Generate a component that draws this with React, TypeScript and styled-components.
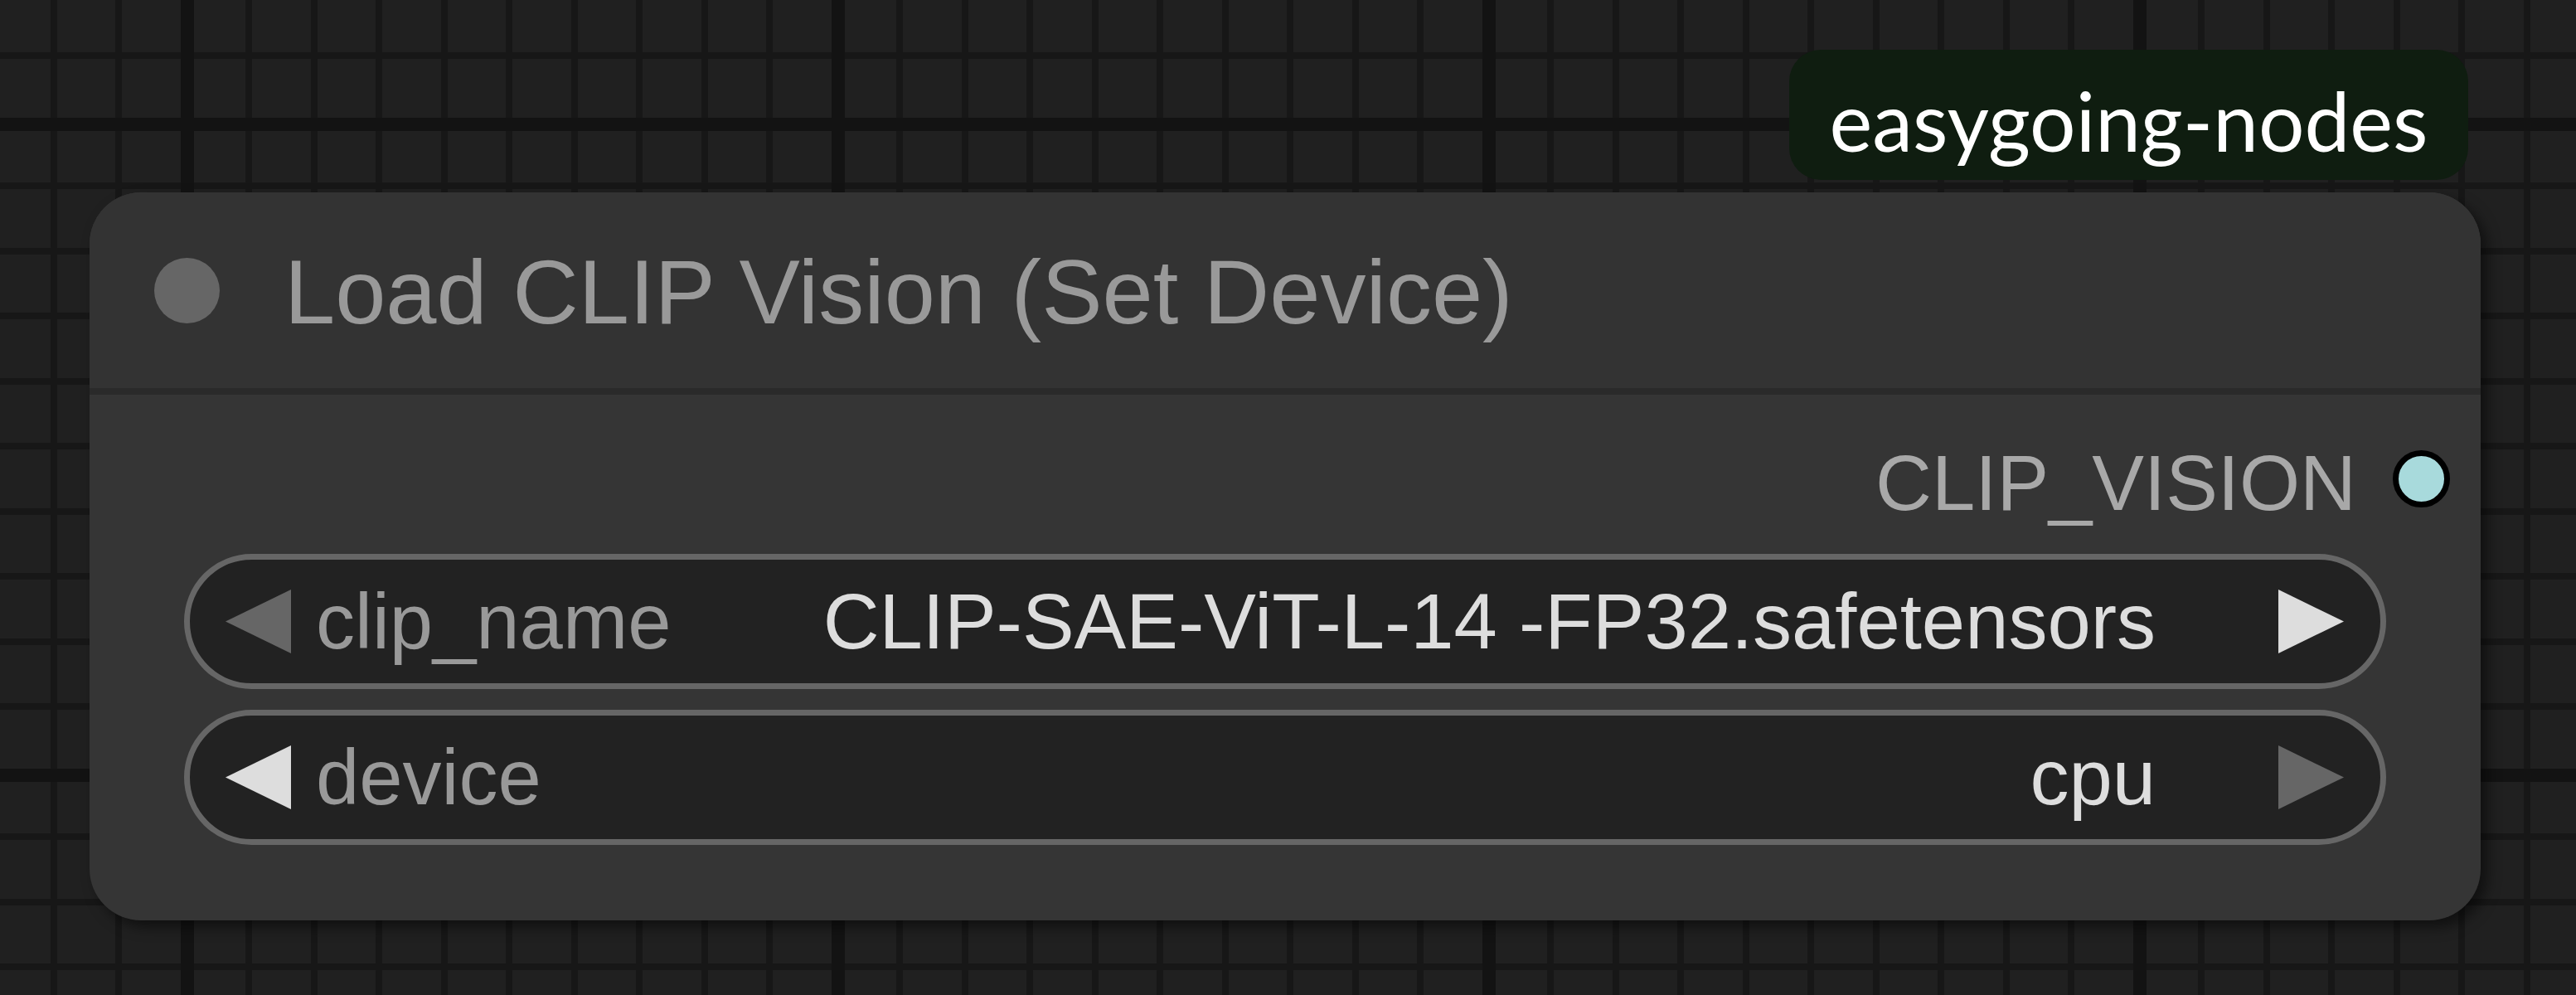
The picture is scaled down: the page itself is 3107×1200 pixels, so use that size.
import React from "react";
import styled, { createGlobalStyle } from "styled-components";

const GlobalStyle = createGlobalStyle`
  html, body {
    margin: 0;
    padding: 0;
    overflow: hidden;
    background: #202020;
  }
`;

const Canvas = styled.main`
  box-sizing: border-box;
  width: 3107px;
  height: 1200px;
  padding: 60px 0 0 108px;
  background-color: #202020;
  background-image:
    linear-gradient(to right, #131313 0 16px, transparent 16px),
    linear-gradient(to bottom, #131313 0 16px, transparent 16px),
    linear-gradient(
      to right,
      #171717 0 8px,
      transparent 8px 78.5px,
      #171717 78.5px 86.5px,
      transparent 86.5px
    ),
    linear-gradient(
      to bottom,
      #171717 0 8px,
      transparent 8px 78.5px,
      #171717 78.5px 86.5px,
      transparent 86.5px
    );
  background-size: 785px 100%, 100% 785px, 157px 100%, 100% 157px;
  background-position: 218px 0, 0 142px, 218px 0, 0 142px;
  font-family: "Liberation Sans", Arial, sans-serif;
`;

const NodeGroup = styled.div`
  display: flex;
  flex-direction: column;
  align-items: flex-end;
  width: 2884px;
`;

const Badge = styled.div`
  box-sizing: border-box;
  display: flex;
  justify-content: center;
  align-items: flex-start;
  width: 819px;
  height: 157px;
  margin: 0 15px 15px 0;
  padding-top: 36px;
  border-radius: 38px;
  background: #0f1d10;
  color: #ffffff;
  font-family: Lato, "Open Sans", sans-serif;
  font-size: 98px;
  line-height: 98px;
  white-space: nowrap;
`;

const Node = styled.section`
  box-sizing: border-box;
  display: flex;
  flex-direction: column;
  width: 2884px;
  height: 878px;
  border-radius: 62px;
  background: #353535;
  box-shadow: 8px 8px 16px rgba(0, 0, 0, 0.5);
`;

const TitleBar = styled.header`
  box-sizing: border-box;
  display: flex;
  align-items: center;
  height: 244px;
  padding-left: 78px;
  border-radius: 62px 62px 0 0;
  border-bottom: 8px solid #2a2a2a;
  background: #333333;
`;

const TitleDot = styled.span`
  flex: none;
  width: 79px;
  height: 79px;
  margin-right: 78px;
  border-radius: 50%;
  background: #666666;
`;

const TitleText = styled.h1`
  margin: 0;
  padding-top: 4px;
  color: #999999;
  font-size: 110px;
  font-weight: 400;
  line-height: 110px;
  white-space: nowrap;
`;

const Body = styled.div`
  display: flex;
  flex-direction: column;
  padding-top: 41px;
`;

const OutputRow = styled.div`
  display: flex;
  justify-content: flex-end;
  align-items: center;
  height: 120px;
  padding-right: 37px;
`;

const OutputLabel = styled.span`
  margin: 12px 44px 0 0;
  color: #a8a8a8;
  font-size: 94px;
  line-height: 94px;
  white-space: nowrap;
`;

const OutputSlot = styled.span<{ $color: string }>`
  box-sizing: border-box;
  flex: none;
  width: 69px;
  height: 69px;
  border: 7px solid #000000;
  border-radius: 50%;
  background: ${(p) => p.$color};
`;

const WidgetList = styled.div`
  display: flex;
  flex-direction: column;
  gap: 25px;
  margin-top: 31px;
  padding: 0 114px;
`;

const Combo = styled.div`
  box-sizing: border-box;
  display: flex;
  align-items: center;
  height: 163px;
  padding: 0 44px 0 43px;
  border: 7px solid #666666;
  border-radius: 82px;
  background: #222222;
  font-size: 94px;
  line-height: 94px;
  white-space: nowrap;
`;

const ArrowIcon = styled.svg<{ $bright: boolean }>`
  flex: none;
  display: block;
  width: 79px;
  height: 77px;
  fill: ${(p) => (p.$bright ? "#dddddd" : "#666666")};
`;

const ComboLabel = styled.span`
  margin-left: 30px;
  color: #999999;
`;

const ComboValue = styled.span`
  flex: 1;
  margin-right: 148px;
  color: #dddddd;
  text-align: right;
`;

type ArrowProps = { dir: "left" | "right"; bright: boolean };

const Arrow = ({ dir, bright }: ArrowProps) => (
  <ArrowIcon $bright={bright} viewBox="0 0 79 77" aria-hidden="true">
    {dir === "left" ? (
      <polygon points="79,0 0,38.5 79,77" />
    ) : (
      <polygon points="0,0 79,38.5 0,77" />
    )}
  </ArrowIcon>
);

type ComboWidgetProps = {
  label: string;
  value: string;
  canPrev: boolean;
  canNext: boolean;
};

const ComboWidget = ({ label, value, canPrev, canNext }: ComboWidgetProps) => (
  <Combo>
    <Arrow dir="left" bright={canPrev} />
    <ComboLabel>{label}</ComboLabel>
    <ComboValue>{value}</ComboValue>
    <Arrow dir="right" bright={canNext} />
  </Combo>
);

export default function App() {
  return (
    <>
      <GlobalStyle />
      <Canvas>
        <NodeGroup>
          <Badge>easygoing-nodes</Badge>
          <Node>
            <TitleBar>
              <TitleDot />
              <TitleText>Load CLIP Vision (Set Device)</TitleText>
            </TitleBar>
            <Body>
              <OutputRow>
                <OutputLabel>CLIP_VISION</OutputLabel>
                <OutputSlot $color="#a8dadc" />
              </OutputRow>
              <WidgetList>
                <ComboWidget
                  label="clip_name"
                  value="CLIP-SAE-ViT-L-14 -FP32.safetensors"
                  canPrev={false}
                  canNext={true}
                />
                <ComboWidget
                  label="device"
                  value="cpu"
                  canPrev={true}
                  canNext={false}
                />
              </WidgetList>
            </Body>
          </Node>
        </NodeGroup>
      </Canvas>
    </>
  );
}
